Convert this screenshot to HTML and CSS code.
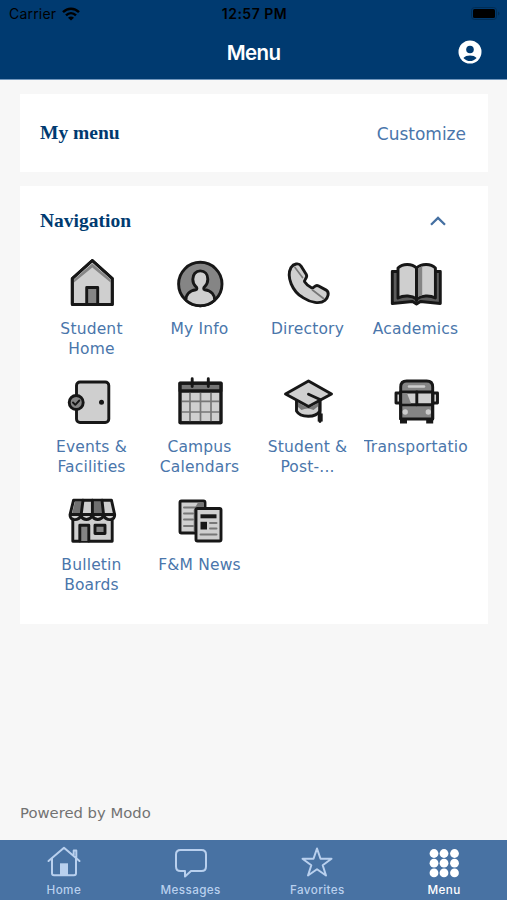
FILE: index.html
```html
<!DOCTYPE html>
<html lang="en">
<head>
    <meta charset="UTF-8">
    <meta name="viewport" content="width=device-width, initial-scale=1.0">
    <title>Menu</title>
    <link rel="stylesheet" href="styles.css">
</head>
<body>
    <header class="header">
        <div class="status-bar">
            <div class="carrier">
                <span>Carrier</span>
                <svg width="18" height="14" viewBox="0 0 18 14" fill="none" stroke="#000" stroke-width="2.4">
                    <path d="M1 5.2C5.5.6 12.5.6 17 5.2M4 8.4c3-3 7-3 10 0"/>
                    <path d="M9 13.6 6 10.7c1.8-1.6 4.2-1.6 6 0z" fill="#000" stroke="none"/>
                </svg>
            </div>
            <span class="time">12:57 PM</span>
            <svg class="battery" width="29" height="13" viewBox="0 0 29 13">
                <rect x=".5" y=".5" width="25" height="12" rx="3" fill="none" stroke="#002d55"/>
                <rect x="2" y="2" width="22" height="9" rx="1.5"/>
                <path d="M27 4.5v4c2-.7 2-3.300 0-4z" fill="#002d55"/>
            </svg>
        </div>
        <div class="title-bar">
            <h1>Menu</h1>
            <svg class="account" width="24" height="24" viewBox="0 0 24 24">
                <circle cx="12" cy="12" r="11.5" fill="#fff"/>
                <circle cx="12" cy="9.5" r="3.8" fill="#003a70"/>
                <path d="M5.4 18c2.8-3.3 10.400-3.300 13.200 0-3.500 4.100-9.700 4.100-13.200 0z" fill="#003a70"/>
            </svg>
        </div>
    </header>

    <main class="content">
        <section class="card my-menu">
            <h2>My menu</h2>
            <a class="customize">Customize</a>
        </section>

        <section class="card navigation">
            <div class="card-head">
                <h2>Navigation</h2>
                <svg width="16" height="10" viewBox="0 0 16 10" fill="none" stroke="#4570a2" stroke-width="2.3">
                    <path d="M1 8.8 8 1.900l7 6.900"/>
                </svg>
            </div>
            <div class="grid">
                <a class="item">
                    <svg class="icon" viewBox="0 0 48 48">
                        <path class="light" d="M4.300 19.500 24.300 1.500l20 18v26h-40z"/>
                        <path d="m6 20.500 18.300-16 18.300 16v3L24.300 8.500 6 23.500z" fill="#858585" stroke="none"/>
                        <path class="dark" d="M18.700 45.500V28.500h11v17"/>
                        <path d="M4.300 19.500 24.300 1.500l20 18v26h-40z"/>
                    </svg>
                    <span>Student Home</span>
                </a>
                <a class="item">
                    <svg class="icon" viewBox="0 0 48 48">
                        <circle class="dark" cx="24.300" cy="25" r="21.700"/>
                        <path class="light" d="M10 41.200c-.3-5 3-9.500 9.800-10.500 1.600-.3 1.300-2 .1-3-2-2-3.100-4.500-3.100-7.500 0-5 3-8.300 7.500-8.300s7.500 3.300 7.500 8.300c0 3-1.100 5.500-3.100 7.500-1.200 1-1.500 2.700.1 3 6.800 1 10.100 5.500 9.800 10.500-7.500 7.300-21.100 7.300-28.600 0z"/>
                    </svg>
                    <span>My Info</span>
                </a>
                <a class="item">
                    <svg class="icon" viewBox="0 0 48 48">
                        <path class="light" d="M7 8.500c2.500-3.800 7.800-5 10-1.500l5.300 8.500c2 3.500-3 4.800-1.500 7.500 1.600 2.500 4 4.500 6.700 5.800 2.700 1 3.200-3.500 6.700-2l8 4.300c3.500 2.200 2 7.700-1.300 10.300-5 4-14 2.300-22-2.800C8.500 32.500 2 18 7 8.500z"/>
                        <path d="m11 8.500 7.500 10M28.500 31l11 8.500" stroke="#777" stroke-width="1.700"/>
                    </svg>
                    <span>Directory</span>
                </a>
                <a class="item">
                    <svg class="icon" viewBox="0 0 48 48">
                        <path d="M.3 12.500h48V44.500l-19.800-2-4 2.500-4-2.500L.3 44.500z" fill="#5c5c5c"/>
                        <path class="light" d="M6 9C11 4 20 4.500 24.500 9v31C20 36.500 12 36 6 39z"/>
                        <path class="light" d="M24.500 9C29.500 4.500 38.500 4 43.400 9v30c-5.700-3-13.700-2.500-18.900 1z"/>
                        <path d="M26 9.500c1-1 2.500-1.800 4.200-2.300v29c-1.700.3-3 1-4.200 1.800z" fill="#858585" stroke="none"/>
                        <path d="M24.500 9v32.500" stroke-width="3"/>
                    </svg>
                    <span>Academics</span>
                </a>
                <a class="item">
                    <svg class="icon" viewBox="0 0 48 48">
                        <rect class="light" x="8.500" y="5" width="32.300" height="40.500" rx="3.500"/>
                        <circle class="dark" cx="8.200" cy="25.500" r="7"/>
                        <path d="m5 25.500 2.300 2.300 4-4.300" stroke-width="1.900"/>
                        <circle cx="33.500" cy="25.300" r="2.500" fill="#171717" stroke="none"/>
                    </svg>
                    <span>Events &amp; Facilities</span>
                </a>
                <a class="item">
                    <svg class="icon" viewBox="0 0 48 48">
                        <path class="light" d="M4 6.300h41v39.500H4z"/>
                        <path d="M4 6.300h41V14H4z" fill="#757575"/>
                        <path d="M14 15.500v29M24.500 15.500v29M35 15.500v29M5.500 24.300h38M5.500 35h38" stroke="#777" stroke-width="1.700"/>
                        <path d="M16.200 1.800v7.700M32.300 1.800v7.700"/>
                        <path d="M4 6.300h41v39.500H4zM4 14h41"/>
                    </svg>
                    <span>Campus Calendars</span>
                </a>
                <a class="item">
                    <svg class="icon" viewBox="0 0 48 48">
                        <path class="light" d="M12.500 22v12c4 7 19.500 7 23.300 0V22z"/>
                        <path d="M14 25.500c5 3 8 4.500 10.500 4.500S31 28 34.500 25.500V29l-5 4c-4-2-8-2-12 0L14 30z" fill="#777" stroke="none"/>
                        <path class="light" d="m1.500 17 23-13 23 13-23 12.500z"/>
                        <path d="m24.500 17.200 11.500 5.300v22"/>
                        <path d="M36.200 36.500v8" stroke-width="5" stroke-linecap="butt"/>
                    </svg>
                    <span>Student &amp; Post-...</span>
                </a>
                <a class="item">
                    <svg class="icon" viewBox="0 0 48 48">
                        <path d="M8.700 16H4v10h4.700M40.500 16H45.500v10h-5" class="light"/>
                        <path d="M11.500 42v4.500M37.700 42v4.500" stroke-width="7" stroke-linecap="butt"/>
                        <path class="dark" d="M8.700 10c0-4 2.300-6 6-6h20c3.700 0 6 2 6 6v32h-32z"/>
                        <path d="M17 9.500h15" stroke="#ccc" stroke-width="2.500"/>
                        <path class="light" d="M8.700 15h32v12.800h-32z"/>
                        <path d="M10 16.300h5l4 10.200h-9z" fill="#858585" stroke="none"/>
                        <path d="M24.800 15v12.800M8.700 15v27M40.700 15v27"/>
                        <circle cx="13.200" cy="35" r="2.700" fill="#ccc" stroke="none"/>
                        <circle cx="36.300" cy="35" r="2.700" fill="#ccc" stroke="none"/>
                    </svg>
                    <span>Transportation</span>
                </a>
                <a class="item">
                    <svg class="icon" viewBox="0 3 48 48">
                        <path class="light" d="M4.800 23h39.400v26.300H4.800z"/>
                        <path class="dark" d="M11.800 49V33.300h9V49M27 33.300h10v8.200H27z"/>
                        <path class="light" d="M5.500 8.300h38l3.200 14.500c0 6-8 6.500-11 1-3 5-9 5-11.300 0-3 5-9 5-11.400 0-3 5.500-11 5-11-1z"/>
                        <path d="M7 9.500h7.500L12.500 22H4zM24.500 9.500h9L35 22H24.500z" fill="#707070" stroke="none"/>
                        <path d="m15 8.300-2 15.500M24.400 8.300v15.500M34 8.300l1.700 15.500M2.500 22.500h43.800"/>
                    </svg>
                    <span>Bulletin Boards</span>
                </a>
                <a class="item">
                    <svg class="icon" viewBox="0 3 48 48">
                        <rect class="light" x="4" y="9" width="25" height="32" rx="1.500"/>
                        <path d="M8 15.500h14M8 21.500h9M8 27.500h9M8 34h9" stroke="#777" stroke-width="2"/>
                        <path d="M22 10.500h5.700v5h-8v24h-2V18z" fill="#777" stroke="none"/>
                        <rect class="light" x="20" y="16.500" width="25" height="32.500" rx="1.500"/>
                        <path d="M24.500 24.300h16" stroke-width="4" stroke-linecap="butt"/>
                        <path d="M24.500 29.800h6.500v7.700h-6.500z" fill="#171717" stroke="none"/>
                        <path d="M34 31h6.500M34 36.500h6.500M24.500 42.500h16" stroke="#777" stroke-width="2"/>
                    </svg>
                    <span>F&amp;M News</span>
                </a>
            </div>
        </section>
    </main>

    <footer class="powered">Powered by Modo</footer>

    <nav class="tabs">
        <a class="tab">
            <svg width="34" height="32" viewBox="0 0 34 32">
                <path d="m1.500 15 15.500-13.300L32.500 15M5 12.500v14.800c0 1.500.5 2 2 2h20c1.500 0 2-.5 2-2V12.500M26.700 9V4.500h2.600v7"/>
                <path d="M13 17.300h8v12h-8z" fill="#b9d0ee" stroke="none"/>
            </svg>
            <span>Home</span>
        </a>
        <a class="tab">
            <svg width="34" height="32" viewBox="0 0 34 32">
                <path d="M6.500 4h21c3 0 4.500 1.700 4.500 4.500v12c0 3-1.500 4.500-4.500 4.500H17l-6 5.500V25H6.500C3.500 25 2 23.500 2 20.500v-12C2 5.700 3.500 4 6.500 4z"/>
            </svg>
            <span>Messages</span>
        </a>
        <a class="tab">
            <svg width="34" height="32" viewBox="0 0 34 32">
                <path d="m17 2.500 3.500 10.300h11L22.700 19.300 26 29.500l-9-6.200-9 6.200 3.300-10.200-8.800-6.500h11z"/>
            </svg>
            <span>Favorites</span>
        </a>
        <a class="tab active">
            <svg width="34" height="32" viewBox="0 0 34 32">
                <circle cx="7" cy="7.500" r="4.400"/><circle cx="17" cy="7.500" r="4.400"/><circle cx="27.500" cy="7.500" r="4.400"/>
                <circle cx="7" cy="17.200" r="4.400"/><circle cx="17" cy="17.200" r="4.400"/><circle cx="27.500" cy="17.200" r="4.400"/>
                <circle cx="7" cy="26.900" r="4.400"/><circle cx="17" cy="26.900" r="4.400"/><circle cx="27.500" cy="26.900" r="4.400"/>
            </svg>
            <span>Menu</span>
        </a>
    </nav>
</body>
</html>
```
FILE: styles.css
```css
* {
    box-sizing: border-box;
}

body {
    display: flex;
    flex-direction: column;
    height: 900px;
    margin: 0;
    background: #f7f7f7;
    font-family: "DejaVu Sans", Verdana, sans-serif;
    color: #4a76ab;
}

h1, h2 {
    margin: 0;
}

.header {
    height: 80px;
    background: #003a70;
    border-bottom: 1px solid #7297bd;
    font-family: Inter, sans-serif;
}

.status-bar {
    display: grid;
    grid-template-columns: 1fr auto 1fr;
    align-items: center;
    height: 27px;
    padding: 0 7px 0 9px;
    color: #000;
    font-size: 14px;
}

.carrier {
    display: flex;
    align-items: center;
    gap: 6px;
    letter-spacing: 0.2px;
}

.time {
    font-weight: 600;
    letter-spacing: 0.5px;
}

.battery {
    justify-self: end;
}

.title-bar {
    display: grid;
    grid-template-columns: 1fr auto 1fr;
    align-items: center;
    height: 50px;
    padding: 0 25px;
}

h1 {
    grid-column: 2;
    color: #fff;
    font-size: 20.5px;
    font-weight: 600;
    letter-spacing: -0.6px;
}

.account {
    justify-self: end;
}

.content {
    display: flex;
    flex-direction: column;
    gap: 14px;
    padding: 14px 19px 0 20px;
}

.card {
    background: #fff;
}

h2 {
    color: #003a70;
    font: bold 19.5px/24px "Liberation Serif", serif;
}

.my-menu {
    display: flex;
    align-items: center;
    justify-content: space-between;
    height: 78px;
    padding: 0 22px 0 20px;
}

.customize {
    padding-top: 2px;
    font-size: 17px;
}

.navigation {
    height: 438px;
}

.card-head {
    display: flex;
    align-items: center;
    justify-content: space-between;
    height: 70px;
    padding: 0 42px 0 20px;
}

.grid {
    display: grid;
    grid-template-columns: repeat(4, 108px);
    grid-auto-rows: 118px;
    padding-left: 17.5px;
}

.item {
    display: flex;
    flex-direction: column;
    align-items: center;
    padding: 3px 2px 0;
}

.icon {
    width: 48px;
    height: 48px;
    overflow: visible;
    fill: none;
    stroke: #171717;
    stroke-width: 2.9;
    stroke-linejoin: round;
    stroke-linecap: round;
}

.light {
    fill: #cfcfcf;
}

.dark {
    fill: #858585;
}

.item span {
    width: 104px;
    margin-top: 13px;
    overflow: hidden;
    font-size: 15.5px;
    line-height: 19.5px;
    letter-spacing: 0.18px;
    text-align: center;
}

.powered {
    margin-top: auto;
    padding: 0 20px 19px;
    color: #727272;
    font-size: 14.8px;
    line-height: 17px;
}

.tabs {
    display: grid;
    grid-template-columns: repeat(4, 1fr);
    height: 60px;
    background: #4872a3;
    font-family: Inter, sans-serif;
}

.tab {
    display: flex;
    flex-direction: column;
    align-items: center;
    padding: 6px 0 0 1px;
    color: #b9d0ee;
    font-size: 11.7px;
    font-weight: 500;
    line-height: 15px;
    letter-spacing: 0.4px;
}

.tab svg {
    fill: none;
    stroke: #b9d0ee;
    stroke-width: 2;
    stroke-linejoin: round;
    stroke-linecap: round;
}

.tab span {
    margin-top: 5px;
}

.tab.active {
    color: #fff;
}

.tab.active svg {
    fill: #fff;
    stroke: none;
}
```
